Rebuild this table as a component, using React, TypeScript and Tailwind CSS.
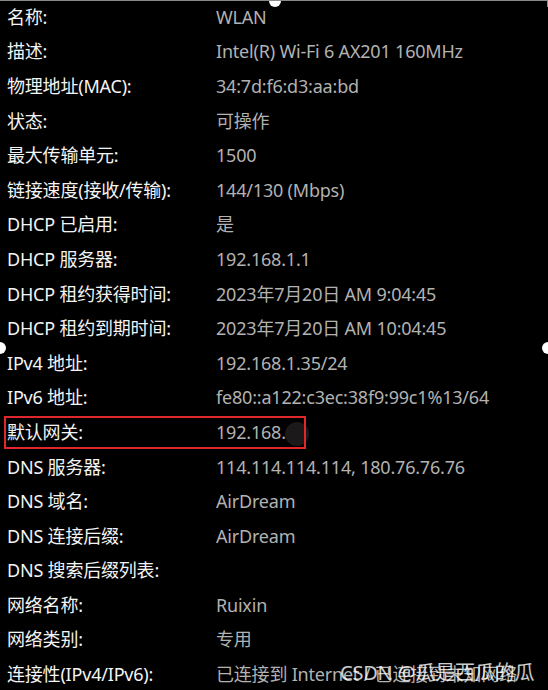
import React from "react";

const rows: [string, string][] = [
  ["名称:", "WLAN"],
  ["描述:", "Intel(R) Wi-Fi 6 AX201 160MHz"],
  ["物理地址(MAC):", "34:7d:f6:d3:aa:bd"],
  ["状态:", "可操作"],
  ["最大传输单元:", "1500"],
  ["链接速度(接收/传输):", "144/130 (Mbps)"],
  ["DHCP 已启用:", "是"],
  ["DHCP 服务器:", "192.168.1.1"],
  ["DHCP 租约获得时间:", "2023年7月20日 AM 9:04:45"],
  ["DHCP 租约到期时间:", "2023年7月20日 AM 10:04:45"],
  ["IPv4 地址:", "192.168.1.35/24"],
  ["IPv6 地址:", "fe80::a122:c3ec:38f9:99c1%13/64"],
  ["默认网关:", "192.168."],
  ["DNS 服务器:", "114.114.114.114, 180.76.76.76"],
  ["DNS 域名:", "AirDream"],
  ["DNS 连接后缀:", "AirDream"],
  ["DNS 搜索后缀列表:", ""],
  ["网络名称:", "Ruixin"],
  ["网络类别:", "专用"],
  ["连接性(IPv4/IPv6):", "已连接到 Internet / 已连接到未知网络"],
];

export default function App() {
  return (
    <div
      className="relative w-[548px] h-[690px] overflow-hidden bg-black border-t border-[#8a8a8a]"
      style={{ fontFamily: '"Noto Sans", "Noto Sans CJK SC", sans-serif' }}
    >
      <div className="flex flex-col -mt-px">
        {rows.map(([label, value], i) => {
          const gateway = i === 12;
          return (
            <div key={i} className="relative flex items-center h-[34.6px] text-[18px] tracking-[-0.2px]">
              <div className="w-[216px] pl-[7px] text-[#f4f4f4] whitespace-nowrap">{label}</div>
              <div className="relative text-[#b2b2b2] whitespace-nowrap">
                {value}
                {gateway && (
                  <span className="absolute left-[69px] top-[3px] w-[24px] h-[24px] rounded-full bg-[#1b1919]" />
                )}
              </div>
              {gateway && (
                <div className="absolute left-[4px] top-[1px] w-[302px] h-[33px] border-2 border-[#e0282c]" />
              )}
            </div>
          );
        })}
      </div>

      {/* selection handles */}
      <span className="absolute left-[269px] -top-[6px] w-[12px] h-[12px] rounded-full bg-white" />
      <span className="absolute -left-[6px] top-[341px] w-[12px] h-[12px] rounded-full bg-white" />
      <span className="absolute -right-[6px] top-[341px] w-[12px] h-[12px] rounded-full bg-white" />
      <div className="absolute right-0 top-0 w-px h-[6px] bg-[#8a8a8a]" />

      {/* watermark */}
      <div className="absolute left-[340px] top-[657px] text-[20px] tracking-[-0.2px] text-white/80 whitespace-nowrap">
        CSDN @瓜是西瓜的瓜
      </div>
    </div>
  );
}
